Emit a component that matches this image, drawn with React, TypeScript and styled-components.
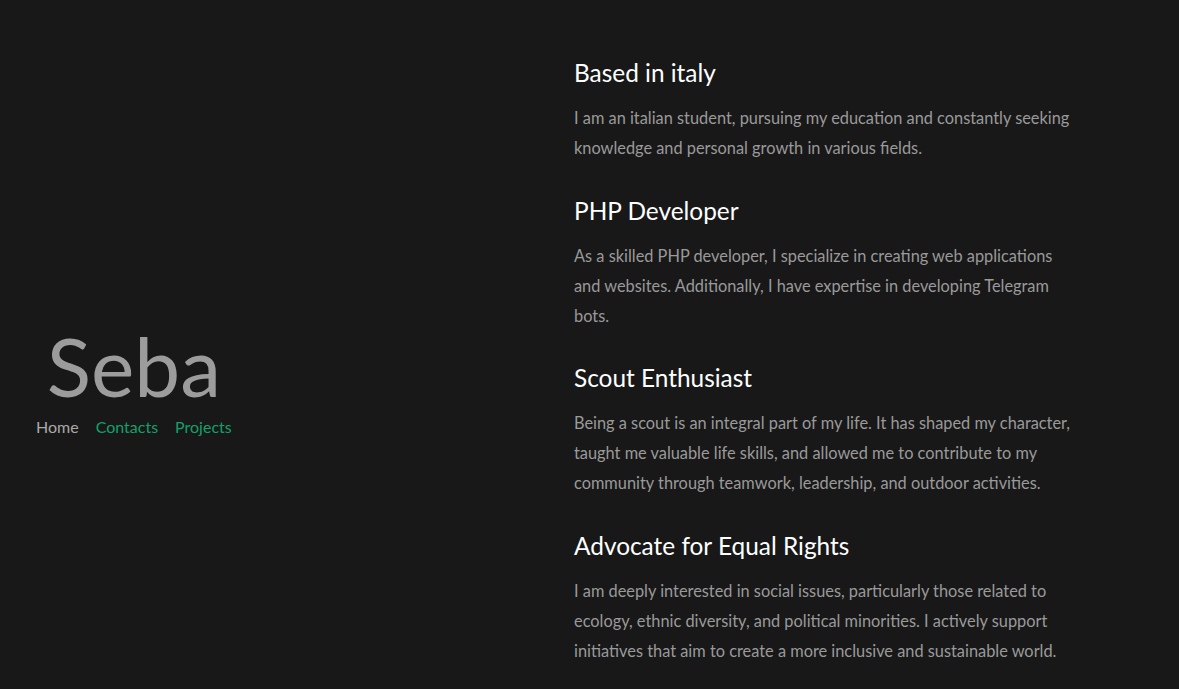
import React from "react";
import styled, { createGlobalStyle } from "styled-components";

const Global = createGlobalStyle`
  html, body { margin: 0; padding: 0; background: #181818; }
  body { font-family: Lato, "Noto Sans", sans-serif; }
`;

const Page = styled.div`
  display: flex;
  min-height: 689px;
  box-sizing: border-box;
  background: #181818;
`;

const Side = styled.div`
  width: 538px;
  padding-left: 36px;
  display: flex;
  flex-direction: column;
  justify-content: center;
  align-items: flex-start;
  padding-top: 66px;
`;

const Brand = styled.div`
  display: flex;
  flex-direction: column;
  align-items: center;
`;

const Name = styled.h1`
  margin: 0;
  font-size: 82px;
  font-weight: 400;
  line-height: 96px;
  color: #9c9c9c;
  letter-spacing: 0px;
`;

const Nav = styled.nav`
  display: flex;
  gap: 17px;
  margin-top: 2px;
`;

const NavLink = styled.a<{ $active?: boolean }>`
  font-size: 16px;
  line-height: 24px;
  text-decoration: none;
  color: ${(p) => (p.$active ? "#a9a9a9" : "#14a068")};
`;

const Main = styled.main`
  width: 505px;
  padding-top: 58px;
  display: flex;
  flex-direction: column;
  gap: 32.5px;
`;

const Section = styled.section`
  display: flex;
  flex-direction: column;
  gap: 15px;
`;

const Title = styled.h2`
  margin: 0;
  font-size: 24.4px;
  font-weight: 400;
  line-height: 30px;
  color: #ffffff;
`;

const Text = styled.p`
  margin: 0;
  font-size: 16.35px;
  line-height: 30px;
  color: #9a9a9a;
`;

const items = [
  {
    t: "Based in italy",
    p: "I am an italian student, pursuing my education and constantly seeking knowledge and personal growth in various fields.",
  },
  {
    t: "PHP Developer",
    p: "As a skilled PHP developer, I specialize in creating web applications and websites. Additionally, I have expertise in developing Telegram bots.",
  },
  {
    t: "Scout Enthusiast",
    p: "Being a scout is an integral part of my life. It has shaped my character, taught me valuable life skills, and allowed me to contribute to my community through teamwork, leadership, and outdoor activities.",
  },
  {
    t: "Advocate for Equal Rights",
    p: "I am deeply interested in social issues, particularly those related to ecology, ethnic diversity, and political minorities. I actively support initiatives that aim to create a more inclusive and sustainable world.",
  },
];

export default function App() {
  return (
    <>
      <Global />
      <Page>
        <Side>
          <Brand>
            <Name>Seba</Name>
            <Nav>
              <NavLink $active href="#">Home</NavLink>
              <NavLink href="#">Contacts</NavLink>
              <NavLink href="#">Projects</NavLink>
            </Nav>
          </Brand>
        </Side>
        <Main>
          {items.map((i) => (
            <Section key={i.t}>
              <Title>{i.t}</Title>
              <Text>{i.p}</Text>
            </Section>
          ))}
        </Main>
      </Page>
    </>
  );
}
